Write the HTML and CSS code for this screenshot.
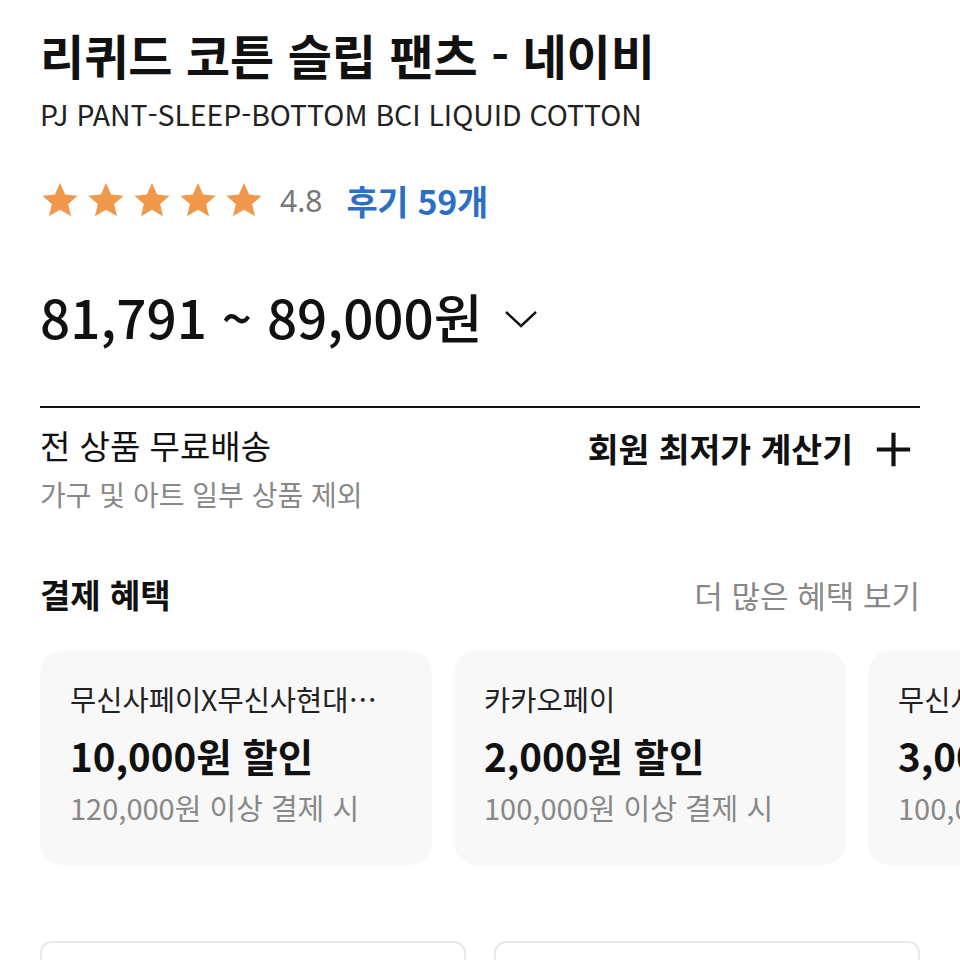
FILE: index.html
```html
<!DOCTYPE html>
<html lang="ko">
<head>
<meta charset="utf-8">
<link rel="stylesheet" href="styles.css">
</head>
<body>
<main class="page">
  <h1 class="title">리퀴드 코튼 슬립 팬츠 - 네이비</h1>
  <p class="subtitle">PJ PANT-SLEEP-BOTTOM BCI LIQUID COTTON</p>

  <div class="rating">
    <div class="stars">
      <svg viewBox="0 0 24 24" class="star"><path d="M12 1.8l3.1 6.9 7.5.7-5.7 5 1.7 7.4L12 17.9l-6.6 3.9 1.7-7.4-5.7-5 7.5-.7z"/></svg>
      <svg viewBox="0 0 24 24" class="star"><path d="M12 1.8l3.1 6.9 7.5.7-5.7 5 1.7 7.4L12 17.9l-6.6 3.9 1.7-7.4-5.7-5 7.5-.7z"/></svg>
      <svg viewBox="0 0 24 24" class="star"><path d="M12 1.8l3.1 6.9 7.5.7-5.7 5 1.7 7.4L12 17.9l-6.6 3.9 1.7-7.4-5.7-5 7.5-.7z"/></svg>
      <svg viewBox="0 0 24 24" class="star"><path d="M12 1.8l3.1 6.9 7.5.7-5.7 5 1.7 7.4L12 17.9l-6.6 3.9 1.7-7.4-5.7-5 7.5-.7z"/></svg>
      <svg viewBox="0 0 24 24" class="star"><path d="M12 1.8l3.1 6.9 7.5.7-5.7 5 1.7 7.4L12 17.9l-6.6 3.9 1.7-7.4-5.7-5 7.5-.7z"/></svg>
    </div>
    <span class="score">4.8</span>
    <span class="reviews">후기 59개</span>
  </div>

  <div class="price-row">
    <span class="price">81,791 ~ 89,000원</span>
    <svg class="chevron" viewBox="0 0 34 20"><path d="M2 3l15 14L32 3"/></svg>
  </div>

  <div class="shipping">
    <div class="ship-text">
      <div class="ship-title">전 상품 무료배송</div>
      <div class="ship-note">가구 및 아트 일부 상품 제외</div>
    </div>
    <div class="calc">
      <span>회원 최저가 계산기</span>
      <svg class="plus" viewBox="0 0 40 40"><path d="M20 2v36M2 20h36"/></svg>
    </div>
  </div>

  <div class="benefit-head">
    <h2 class="benefit-title">결제 혜택</h2>
    <span class="benefit-more">더 많은 혜택 보기</span>
  </div>

  <div class="cards">
    <div class="card">
      <div class="card-name">무신사페이X무신사현대…</div>
      <div class="card-amount">10,000원 할인</div>
      <div class="card-cond">120,000원 이상 결제 시</div>
    </div>
    <div class="card">
      <div class="card-name">카카오페이</div>
      <div class="card-amount">2,000원 할인</div>
      <div class="card-cond">100,000원 이상 결제 시</div>
    </div>
    <div class="card card-peek">
      <div class="card-name">무신사페이</div>
      <div class="card-amount">3,000원 할인</div>
      <div class="card-cond">100,000원 이상 결제 시</div>
    </div>
  </div>

  <div class="boxes">
    <div class="box"></div>
    <div class="box"></div>
  </div>
</main>
</body>
</html>
```

FILE: styles.css
```css
* { box-sizing: border-box; }
html, body { margin: 0; padding: 0; background: #fff; }
body {
  font-family: "Noto Sans CJK KR", "Noto Sans", sans-serif;
  color: #111;
  width: 960px;
  height: 960px;
  overflow: hidden;
}
.page { padding: 22px 40px 0 40px; }

.title {
  margin: 0;
  font-size: 48px;
  font-weight: 700;
  line-height: 64px;
  letter-spacing: 0;
  color: #111;
}
.subtitle {
  margin: 10px 0 0 0;
  font-size: 28.4px;
  line-height: 36px;
  color: #222;
  font-weight: 400;
}

.rating {
  display: flex;
  align-items: center;
  margin-top: 43px;
  height: 50px;
}
.stars { display: flex; gap: 6px; }
.star { width: 40px; height: 40px; fill: #f0984c; }
.score { margin-left: 16px; font-size: 30px; color: #777; font-family: "Noto Sans", sans-serif; }
.reviews { margin-left: 24px; font-size: 34px; color: #2e6fc6; font-weight: 700; letter-spacing: -0.3px; }

.price-row {
  display: flex;
  align-items: center;
  margin-top: 56px;
  height: 70px;
}
.price {
  font-size: 53px;
  font-weight: 500;
  letter-spacing: 0;
  color: #111;
}
.chevron { width: 34px; height: 20px; margin-left: 21px; margin-top: 6px; fill: none; stroke: #111; stroke-width: 2.4; }

.shipping {
  margin-top: 55px;
  border-top: 2px solid #111;
  display: flex;
  justify-content: space-between;
  padding-top: 14px;
}
.ship-title { font-size: 33px; line-height: 46px; color: #111; }
.ship-note { font-size: 28px; line-height: 38px; color: #888; margin-top: 7px; }
.calc { display: flex; align-items: center; height: 50px; font-size: 33.5px; font-weight: 700; padding-right: 8px; }
.plus { width: 37px; height: 37px; margin-left: 22px; margin-top: 4px; fill: none; stroke: #111; stroke-width: 4.5; }

.benefit-head {
  display: flex;
  justify-content: space-between;
  align-items: center;
  margin-top: 59px;
  height: 44px;
}
.benefit-title { margin: 0; font-size: 33px; font-weight: 700; line-height: 44px; }
.benefit-more { font-size: 31px; color: #888; }

.cards {
  display: flex;
  gap: 22px;
  margin-top: 35px;
  margin-right: -40px;
  overflow: hidden;
}
.card {
  flex: 0 0 392px;
  height: 214px;
  background: #f8f8f8;
  border-radius: 22px;
  padding: 28px 30px;
}
.card-peek { overflow: hidden; }
.card-name { font-size: 28.5px; line-height: 40px; color: #222; white-space: nowrap; }
.card-amount { font-size: 38.5px; font-weight: 700; line-height: 52px; margin-top: 10px; color: #111; white-space: nowrap; }
.card-cond { font-size: 29px; line-height: 40px; color: #888; margin-top: 6px; white-space: nowrap; }

.boxes {
  display: flex;
  gap: 28px;
  margin-top: 76px;
}
.box {
  flex: 1;
  height: 100px;
  border: 2px solid #e8e8e8;
  border-radius: 12px;
}
```
